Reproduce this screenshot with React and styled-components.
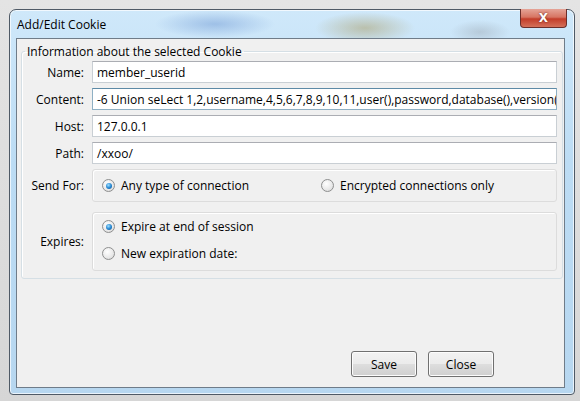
import styled, { createGlobalStyle } from "styled-components";

const GlobalStyle = createGlobalStyle`
  html, body {
    margin: 0;
    padding: 0;
    background: #d9d9d9;
  }
  body {
    font-family: "Open Sans", "Noto Sans", sans-serif;
    font-size: 12px;
    color: #000;
  }
`;

const Page = styled.div`
  width: 580px;
  height: 401px;
  padding: 9px 0 0 9px;
  box-sizing: border-box;
  background: linear-gradient(180deg, #e4e4e4 0%, #d6d6d6 100%);
`;

const Window = styled.div`
  width: 566px;
  height: 386px;
  box-sizing: border-box;
  border: 1px solid #4f5a66;
  border-radius: 7px 7px 4px 4px;
  padding: 0 9px 6px 6px;
  display: flex;
  flex-direction: column;
  background:
    radial-gradient(ellipse 60px 14px at 205px 14px, rgba(120, 160, 215, 0.55), transparent),
    radial-gradient(ellipse 50px 16px at 355px 18px, rgba(170, 160, 110, 0.55), transparent),
    radial-gradient(ellipse 30px 12px at 470px 22px, rgba(150, 160, 170, 0.4), transparent),
    linear-gradient(180deg, #cfe8fa 0%, #bcdcf4 40%, #b7d7f0 100%);
  box-shadow: inset 0 0 0 1px rgba(255, 255, 255, 0.7);
`;

const TitleBar = styled.div`
  height: 28px;
  display: flex;
  align-items: center;
  justify-content: space-between;
  position: relative;
`;

const Title = styled.span`
  padding-left: 1px;
  padding-top: 1px;
  font-size: 12px;
`;

const CloseX = styled.div`
  position: absolute;
  right: -2px;
  top: -1px;
  width: 45px;
  height: 18px;
  border: 1px solid #6b2e2a;
  border-top: none;
  border-radius: 0 0 4px 4px;
  background: linear-gradient(180deg, #e5a497 0%, #d77563 45%, #c33d2a 55%, #d4705a 100%);
  display: flex;
  align-items: center;
  justify-content: center;
  color: #fff;
  font-family: "DejaVu Sans", sans-serif;
  font-weight: bold;
  font-size: 12px;
  text-shadow: 0 0 2px #5a1a10;
`;

const Client = styled.div`
  flex: 1;
  min-width: 0;
  border: 1px solid #6f7c89;
  background: #f0f0f0;
  display: flex;
  flex-direction: column;
  padding: 4px 1px 10px 4px;
`;

const Group = styled.fieldset`
  margin: 0;
  min-width: 0;
  border: 1px solid #d5dfe5;
  border-radius: 3px;
  box-shadow: inset 1px 1px 0 #fff;
  padding: 1px 5px 7px 0;
  display: flex;
  flex-direction: column;
  gap: 5px;
`;

const Legend = styled.legend`
  padding: 0 2px;
  margin-left: 3px;
  font-size: 12px;
`;

const Row = styled.div`
  display: flex;
  align-items: center;
  min-width: 0;
  margin-top: ${(p) => p.extra || 0}px;
`;

const Label = styled.div`
  width: 62px;
  text-align: right;
  flex-shrink: 0;
  margin-right: 8px;
`;

const Input = styled.div`
  flex: 1;
  min-width: 0;
  height: 22px;
  box-sizing: border-box;
  border: 1px solid ${(p) => (p.focused ? "#8fb0c4" : "#c9cfd4")};
  border-top-color: ${(p) => (p.focused ? "#5d8aa6" : "#abadb3")};
  background: #fff;
  padding: 0 4px;
  display: flex;
  align-items: center;
  white-space: nowrap;
  overflow: hidden;
  font-size: 12px;
`;

const OptionBox = styled.div`
  flex: 1;
  height: ${(p) => p.h}px;
  box-sizing: border-box;
  border: 1px solid #dcdcdc;
  border-radius: 3px;
  box-shadow: inset 1px 1px 0 #fff;
  display: flex;
  flex-direction: ${(p) => (p.column ? "column" : "row")};
  justify-content: ${(p) => (p.column ? "center" : "flex-start")};
  align-items: ${(p) => (p.column ? "flex-start" : "center")};
  gap: ${(p) => (p.column ? "10px" : "0")};
  padding-left: 9px;
  padding-bottom: ${(p) => (p.column ? "3px" : "0")};
`;

const Option = styled.label`
  display: flex;
  align-items: center;
  gap: 6px;
  width: ${(p) => (p.w ? `${p.w}px` : "auto")};
`;

const Radio = styled.span`
  width: 11px;
  height: 11px;
  border-radius: 50%;
  border: 1px solid #8e8f8f;
  background: radial-gradient(circle at 40% 35%, #fff 0%, #e8e8e8 60%, #cfcfcf 100%);
  display: flex;
  align-items: center;
  justify-content: center;
  flex-shrink: 0;

  &::after {
    content: "";
    display: ${(p) => (p.checked ? "block" : "none")};
    width: 6px;
    height: 6px;
    border-radius: 50%;
    background: radial-gradient(circle at 40% 35%, #9fe0ff 0%, #2a8ad4 50%, #0b4f8a 100%);
  }
`;

const Spacer = styled.div`
  flex: 1;
`;

const Buttons = styled.div`
  display: flex;
  justify-content: flex-end;
  gap: 11px;
  padding-right: 69px;
`;

const Button = styled.button`
  width: 66px;
  height: 26px;
  border: 1px solid #707070;
  border-radius: 3px;
  background: linear-gradient(180deg, #f2f2f2 0%, #ebebeb 48%, #dddddd 52%, #cfcfcf 100%);
  box-shadow: inset 0 0 0 1px #fcfcfc;
  font-family: inherit;
  font-size: 12px;
  color: #000;
  padding: 0;
`;

export default function App() {
  return (
    <Page>
      <GlobalStyle />
      <Window>
        <TitleBar>
          <Title>Add/Edit Cookie</Title>
          <CloseX>X</CloseX>
        </TitleBar>
        <Client>
          <Group>
            <Legend>Information about the selected Cookie</Legend>
            <Row>
              <Label>Name:</Label>
              <Input>member_userid</Input>
            </Row>
            <Row>
              <Label>Content:</Label>
              <Input focused>
                -6 Union seLect 1,2,username,4,5,6,7,8,9,10,11,user(),password,database(),version()
              </Input>
            </Row>
            <Row>
              <Label>Host:</Label>
              <Input>127.0.0.1</Input>
            </Row>
            <Row>
              <Label>Path:</Label>
              <Input>/xxoo/</Input>
            </Row>
            <Row>
              <Label>Send For:</Label>
              <OptionBox h={33}>
                <Option w={219}>
                  <Radio checked />
                  Any type of connection
                </Option>
                <Option>
                  <Radio />
                  Encrypted connections only
                </Option>
              </OptionBox>
            </Row>
            <Row extra={5}>
              <Label>Expires:</Label>
              <OptionBox h={59} column>
                <Option>
                  <Radio checked />
                  Expire at end of session
                </Option>
                <Option>
                  <Radio />
                  New expiration date:
                </Option>
              </OptionBox>
            </Row>
          </Group>
          <Spacer />
          <Buttons>
            <Button>Save</Button>
            <Button>Close</Button>
          </Buttons>
        </Client>
      </Window>
    </Page>
  );
}
